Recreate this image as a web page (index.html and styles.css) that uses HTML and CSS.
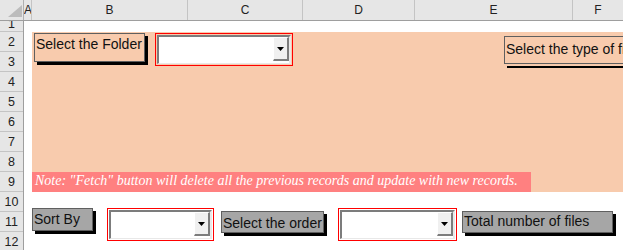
FILE: index.html
```html
<!DOCTYPE html>
<html>
<head>
<meta charset="utf-8">
<link rel="stylesheet" href="styles.css">
</head>
<body>
<div class="sheet">
  <div class="colhead">
    <div class="hc corner"><svg class="tri" width="14" height="12" viewBox="0 0 14 12"><polygon points="0,12 14,12 14,0" fill="#bcbcbc"/></svg></div>
    <div class="hc">A</div>
    <div class="hc">B</div>
    <div class="hc">C</div>
    <div class="hc">D</div>
    <div class="hc">E</div>
    <div class="hc last">F</div>
  </div>
  <div class="body">
    <div class="rowheads">
      <div class="rh first"><span>1</span></div>
      <div class="rh">2</div>
      <div class="rh">3</div>
      <div class="rh">4</div>
      <div class="rh">5</div>
      <div class="rh">6</div>
      <div class="rh">7</div>
      <div class="rh">8</div>
      <div class="rh">9</div>
      <div class="rh">10</div>
      <div class="rh">11</div>
      <div class="rh">12</div>
    </div>
    <div class="cells">
      <div class="fill">
        <div class="note">Note: "Fetch" button will delete all the previous records and update with new records.</div>
      </div>
    </div>
  </div>

  <div class="shape btn-folder">Select the Folder</div>
  <div class="frame combo1"><div class="combo"><div class="drop"><svg width="7" height="4" viewBox="0 0 7 4"><polygon points="0,0 7,0 3.5,4" fill="#000"/></svg></div></div></div>
  <div class="shape btn-type">Select the type of files</div>

  <div class="shape gray btn-sort">Sort By</div>
  <div class="frame combo2"><div class="combo"><div class="drop"><svg width="7" height="4" viewBox="0 0 7 4"><polygon points="0,0 7,0 3.5,4" fill="#000"/></svg></div></div></div>
  <div class="shape gray btn-order">Select the order</div>
  <div class="frame combo3"><div class="combo"><div class="drop"><svg width="7" height="4" viewBox="0 0 7 4"><polygon points="0,0 7,0 3.5,4" fill="#000"/></svg></div></div></div>
  <div class="shape gray btn-total">Total number of files</div>
</div>
</body>
</html>
```

FILE: styles.css
```css
* { box-sizing: border-box; }
html, body { margin: 0; padding: 0; }
body {
  width: 623px;
  height: 250px;
  overflow: hidden;
  background: #ffffff;
  font-family: "Liberation Sans", Arial, sans-serif;
}
.sheet {
  position: relative;
  width: 623px;
  height: 250px;
  overflow: hidden;
}
.colhead {
  display: grid;
  grid-template-columns: 24px 8px 156px 115px 112px 158px 1fr;
  height: 21px;
  background: #e6e6e6;
  border-bottom: 1px solid #9e9e9e;
}
.hc {
  border-right: 1px solid #c4c4c4;
  font-size: 12px;
  line-height: 20px;
  text-align: center;
  color: #222222;
  overflow: hidden;
}
.hc.corner {
  border-right: 1px solid #b0b0b0;
  position: relative;
}
.hc.last { border-right: none; }
.tri { position: absolute; left: 8px; top: 5px; }

.body { display: flex; }
.rowheads {
  width: 24px;
  flex: none;
  background: #e6e6e6;
  border-right: 1px solid #9e9e9e;
}
.rh {
  height: 20px;
  border-bottom: 1px solid #c4c4c4;
  font-size: 12.5px;
  line-height: 20px;
  text-align: center;
  color: #222222;
  overflow: hidden;
}
.rh.first { height: 11px; line-height: 10px; }
.rh.first span { display: block; margin-top: -7px; line-height: 20px; }

.cells { flex: 1; padding-top: 11px; padding-left: 8px; }
.fill {
  height: 160px;
  background: #f8cbad;
  padding-top: 140px;
}
.note {
  width: 499px;
  height: 20px;
  background: #ff8080;
  color: #ffffff;
  font-family: "Liberation Serif", "Times New Roman", serif;
  font-style: italic;
  font-size: 14px;
  line-height: 17px;
  padding-left: 3px;
  white-space: nowrap;
  overflow: hidden;
}

.shape {
  position: absolute;
  border: 1px solid #5f5f5f;
  box-shadow: 3px 3px 0 0 #000000;
  font-size: 14px;
  line-height: 16px;
  color: #111111;
  padding-left: 1px;
  white-space: nowrap;
  overflow: hidden;
}
.shape.gray { background: #a6a6a6; }
.btn-folder { left: 34px; top: 33px; width: 111px; height: 29px; padding-top: 2px; }
.btn-type { left: 504px; top: 36px; width: 150px; height: 28px; padding-top: 4px; box-shadow: 0 2px 0 0 #f8cbad, 3px 4px 0 0 #000; }
.btn-sort { left: 32px; top: 208px; width: 61px; height: 23px; padding-top: 2px; }
.btn-order { left: 221px; top: 211px; width: 103px; height: 22px; padding-top: 3px; }
.btn-total { left: 462px; top: 211px; width: 151px; height: 22px; padding-top: 1px; }

.frame {
  position: absolute;
  border: 1px solid #ff0000;
  padding: 1px;
  height: 33px;
}
.combo1 { left: 155px; top: 33px; width: 138px; }
.combo2 { left: 107px; top: 208px; width: 107px; }
.combo3 { left: 338px; top: 208px; width: 119px; }
.combo {
  height: 100%;
  background: #ffffff;
  border-style: solid;
  border-width: 2px 2px 1px 2px;
  border-color: #7c7c7c #e8e8e8 #e8e8e8 #7c7c7c;
  display: flex;
  justify-content: flex-end;
  padding: 0 0 2px 0;
}
.drop {
  width: 16px;
  height: 100%;
  background: #f0f0f0;
  border-style: solid;
  border-width: 1px 2px 2px 1px;
  border-color: #ffffff #7c7c7c #7c7c7c #ffffff;
  display: flex;
  align-items: center;
  justify-content: center;
}
.drop svg { display: block; }
```
